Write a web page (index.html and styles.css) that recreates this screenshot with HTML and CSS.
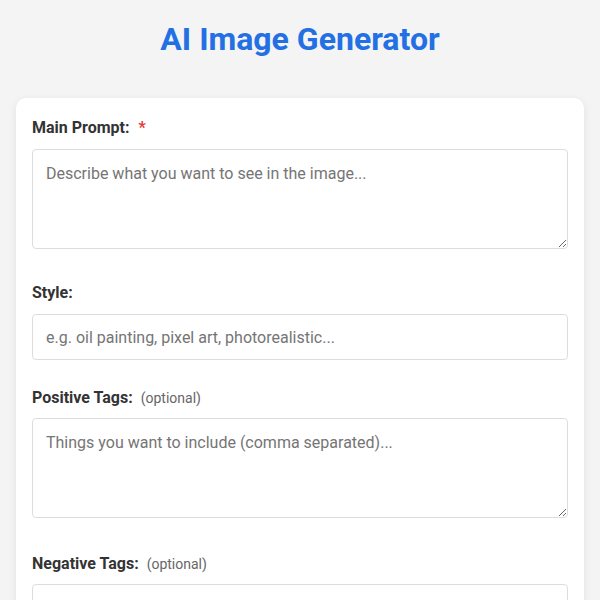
FILE: index.html
```html
<!DOCTYPE html>
<html lang="en">
<head>
<meta charset="utf-8">
<title>AI Image Generator</title>
<link rel="stylesheet" href="styles.css">
</head>
<body>
  <h1 class="title">AI Image Generator</h1>
  <form class="card">
    <div class="group group-area">
      <label class="label" for="prompt">Main Prompt: <span class="req">*</span></label>
      <textarea id="prompt" class="field area" placeholder="Describe what you want to see in the image..."></textarea>
    </div>
    <div class="group group-input">
      <label class="label" for="style">Style:</label>
      <input id="style" class="field input" type="text" placeholder="e.g. oil painting, pixel art, photorealistic...">
    </div>
    <div class="group group-area">
      <label class="label label-opt" for="pos">Positive Tags: <span class="opt">(optional)</span></label>
      <textarea id="pos" class="field area" placeholder="Things you want to include (comma separated)..."></textarea>
    </div>
    <div class="group group-area">
      <label class="label label-opt" for="neg">Negative Tags: <span class="opt">(optional)</span></label>
      <textarea id="neg" class="field area" placeholder="Things you want to avoid (comma separated)..."></textarea>
    </div>
  </form>
</body>
</html>
```
FILE: styles.css
```css
* { box-sizing: border-box; }
html, body { margin: 0; }
body {
  background: #f4f4f4;
  font-family: Roboto, "Liberation Sans", sans-serif;
  color: #333;
  padding: 21px 16px 16px;
}
.title {
  margin: 0 0 40px;
  text-align: center;
  font-size: 32px;
  font-weight: 700;
  line-height: 37px;
  color: #2270e4;
}
.card {
  background: #fff;
  border-radius: 10px;
  box-shadow: 0 2px 8px rgba(0, 0, 0, 0.08);
  padding: 20px 16px 16px;
}
.group-area { margin-bottom: 34px; }
.group-input { margin-bottom: 28px; }
.group-area + .group-area { margin-top: 36px; }
.label {
  display: block;
  font-size: 16px;
  font-weight: 700;
  line-height: 19px;
  margin-bottom: 12px;
  color: #333;
}
.label-opt { margin-bottom: 10px; }
.req {
  color: #e53935;
  margin-left: 5px;
}
.opt {
  font-weight: 400;
  font-size: 14px;
  color: #666;
  margin-left: 4px;
}
.field {
  display: block;
  width: 100%;
  border: 1px solid #ddd;
  border-radius: 4px;
  padding: 12px 13px;
  font-family: Roboto, "Liberation Sans", sans-serif;
  font-size: 16px;
  line-height: 19px;
  color: #333;
  background: #fff;
  margin: 0;
}
.field::placeholder { color: #757575; }
.area { height: 100px; resize: vertical; padding-top: 14px; }
.input { height: 46px; }
```
